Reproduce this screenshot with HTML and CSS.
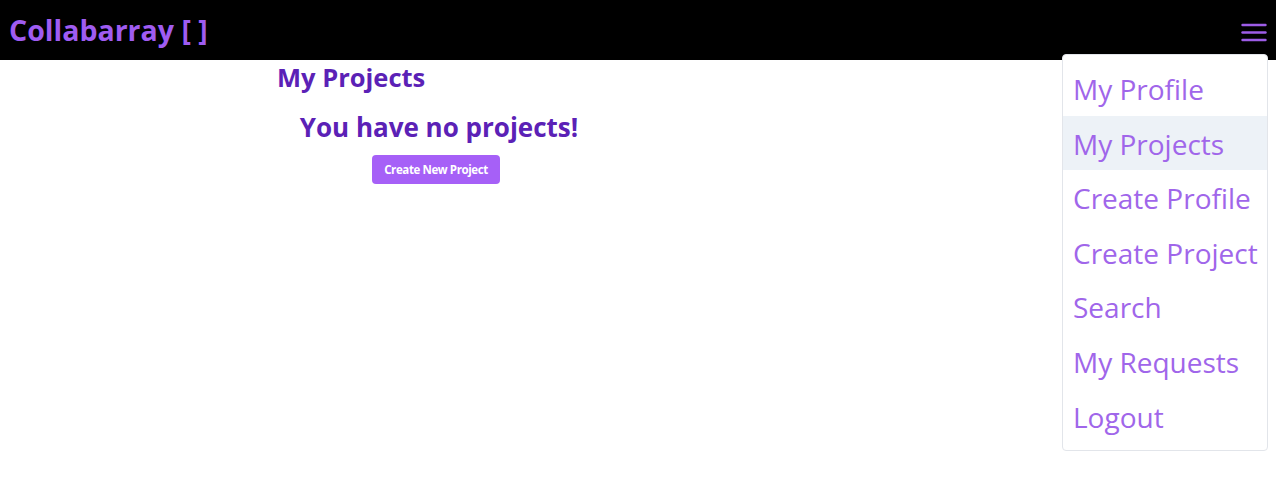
FILE: index.html
```html
<!DOCTYPE html>
<html lang="en">
<head>
<meta charset="utf-8">
<title>Collabarray</title>
<link rel="stylesheet" href="styles.css">
</head>
<body>
<header class="topbar">
  <div class="brand">Collabarray [ ]</div>
  <button class="menu-btn" aria-label="Menu">
    <svg width="26" height="20" viewBox="0 0 26 20"><g stroke="#9d5ce6" stroke-width="2.4" stroke-linecap="round"><line x1="1.5" y1="3" x2="24.5" y2="3"/><line x1="1.5" y1="10.5" x2="24.5" y2="10.5"/><line x1="1.5" y1="18" x2="24.5" y2="18"/></g></svg>
  </button>
</header>
<main class="content">
  <h1 class="page-title">My Projects</h1>
  <div class="empty">
    <h2 class="empty-title">You have no projects!</h2>
    <button class="create-btn">Create New Project</button>
  </div>
</main>
<nav class="dropdown">
  <a class="item">My Profile</a>
  <a class="item active">My Projects</a>
  <a class="item">Create Profile</a>
  <a class="item">Create Project</a>
  <a class="item">Search</a>
  <a class="item">My Requests</a>
  <a class="item">Logout</a>
</nav>
</body>
</html>
```
FILE: styles.css
```css
html, body { margin: 0; padding: 0; background: #fff; }
body { font-family: "Open Sans", "Noto Sans", sans-serif; }
.topbar {
  height: 60px;
  background: #000;
  display: flex;
  align-items: center;
  justify-content: space-between;
  padding: 0 9px 0 9px;
  box-sizing: border-box;
}
.brand {
  color: #9f5cf1;
  font-weight: 700;
  font-size: 28.5px;
  margin-top: -1px;
}
.menu-btn {
  background: none;
  border: 0;
  padding: 0;
  width: 26px;
  height: 20px;
  margin-top: 4px;
}
.menu-btn svg { display: block; }
.content { padding-left: 277px; }
.page-title {
  margin: 1px 0 0 0;
  font-size: 25.5px;
  line-height: 33px;
  font-weight: 700;
  color: #5b21b6;
}
.empty {
  width: 324px;
  display: flex;
  flex-direction: column;
  align-items: center;
}
.empty-title {
  margin: 16px 0 0 0;
  font-size: 26px;
  line-height: 35px;
  font-weight: 700;
  color: #5b21b6;
}
.create-btn {
  margin-top: 10px;
  margin-right: 6px;
  background: #a660f7;
  color: #fff;
  border: 0;
  border-radius: 4px;
  font-family: "Open Sans", sans-serif;
  font-weight: 700;
  font-size: 11.5px;
  letter-spacing: -0.4px;
  height: 29px;
  width: 128px;
  padding: 0;
}
.dropdown {
  position: absolute;
  top: 54px;
  left: 1062px;
  width: 206px;
  box-sizing: border-box;
  border: 1px solid #e2e5ea;
  border-radius: 4px;
  background: #fff;
  padding: 6px 0 7px 0;
  display: flex;
  flex-direction: column;
}
.item {
  display: block;
  height: 54.6px;
  line-height: 56px;
  padding-left: 10px;
  font-size: 28px;
  color: #a066ea;
  white-space: nowrap;
}
.item.active { background: #edf2f7; }
```
